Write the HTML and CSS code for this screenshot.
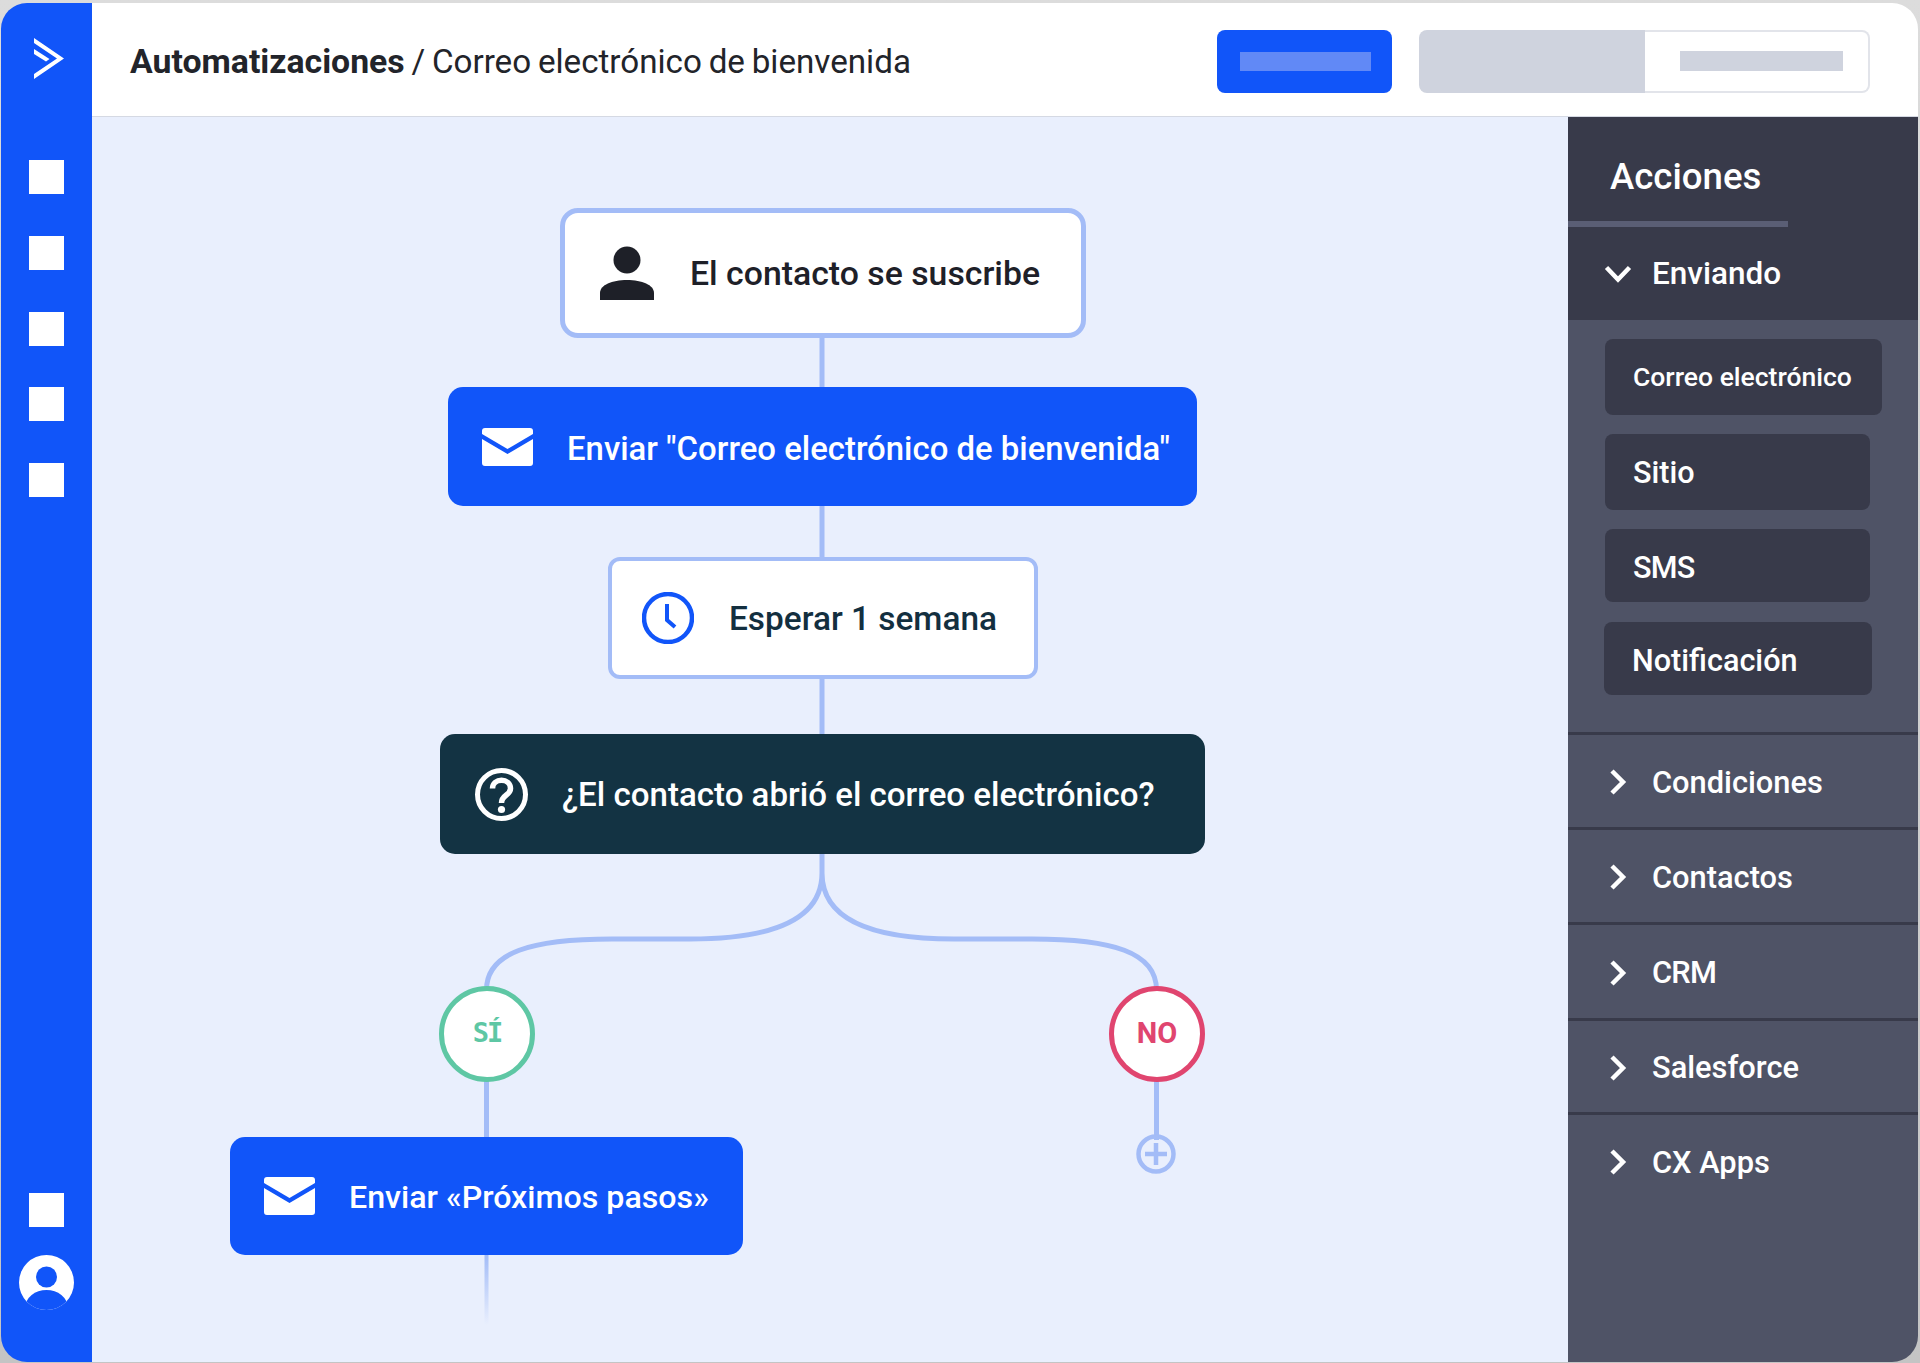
FILE: index.html
```html
<!DOCTYPE html>
<html lang="es">
<head>
<meta charset="utf-8">
<title>Automatizaciones</title>
<link rel="stylesheet" href="styles.css">
</head>
<body>
<div class="frame">
  <nav class="rail">
    <svg class="logo" viewBox="0 0 30 41"><path d="M0 0 L30 20.5 L0 41 V36 L23 20.5 L0 5 Z" fill="#fff"/><path d="M0 11 L15.5 21 L12 23.5 L0 16 Z" fill="#fff"/></svg>
    <div class="rail-items">
      <span class="sq"></span><span class="sq"></span><span class="sq"></span><span class="sq"></span><span class="sq"></span>
    </div>
    <span class="sq bottom-sq"></span>
    <svg class="avatar" viewBox="0 0 55 55"><defs><clipPath id="av"><circle cx="27.5" cy="27.5" r="27.5"/></clipPath></defs><circle cx="27.5" cy="27.5" r="27.5" fill="#fff"/><g clip-path="url(#av)"><circle cx="27.5" cy="22" r="10.5" fill="#1155f9"/><ellipse cx="27.5" cy="52" rx="21" ry="17" fill="#1155f9"/></g></svg>
  </nav>
  <div class="main">
    <header class="topbar">
      <h1 class="crumb"><strong>Automatizaciones</strong> / Correo electrónico de bienvenida</h1>
      <div class="btn-blue"><span></span></div>
      <div class="seg"><span class="seg-left"></span><span class="seg-right"><span></span></span></div>
    </header>
    <div class="body">
      <section class="canvas">
        <svg class="wires" viewBox="0 0 1476 1245">
          <path d="M730 200 V753 C730 795 690 819 598 819 H520 C440 819 394.5 832 394.5 870 M730 753 C730 795 770 819 862 819 H940 C1020 819 1064.5 832 1064.5 870 M394.5 960 V1020 M1064.5 960 V1020"/>
          <defs><linearGradient id="fade" x1="0" y1="0" x2="0" y2="1"><stop offset="0" stop-color="#a3bcf7"/><stop offset="1" stop-color="#a3bcf7" stop-opacity="0"/></linearGradient></defs>
          <rect x="392.5" y="1135" width="4" height="70" fill="url(#fade)"/>
        </svg>
        <div class="node trigger"><svg class="ic-person" viewBox="0 0 54 54"><ellipse cx="27" cy="14" rx="13.5" ry="13.5" fill="#1e2028"/><path d="M0 54 V47 C0 39 12 34 27 34 C42 34 54 39 54 47 V54 Z" fill="#1e2028"/></svg><span>El contacto se suscribe</span></div>
        <div class="node send1"><svg class="ic-mail" viewBox="0 0 51 38"><use href="#mail"/></svg><span class="nudge2">Enviar "Correo electrónico de bienvenida"</span></div>
        <div class="node wait"><svg class="ic-clock" viewBox="0 0 52 52"><circle cx="26" cy="26" r="24" fill="none" stroke="#1155f9" stroke-width="4.5"/><path d="M25 12 V28 L33 35" fill="none" stroke="#1155f9" stroke-width="4"/></svg><span>Esperar 1 semana</span></div>
        <div class="node ask"><svg class="ic-q" viewBox="0 0 53 53"><circle cx="26.5" cy="26.5" r="24" fill="none" stroke="#fff" stroke-width="5"/><path d="M17.5 20.5 C17.5 9.5 35.5 9.5 35.5 20.5 C35.5 27.5 26.5 26.5 26.5 35" fill="none" stroke="#fff" stroke-width="5.5"/><circle cx="26.5" cy="41.5" r="3.6" fill="#fff"/></svg><span>¿El contacto abrió el correo electrónico?</span></div>
        <div class="badge yes">SÍ</div>
        <div class="badge no">NO</div>
        <div class="plus"><svg viewBox="0 0 40 40"><circle cx="20" cy="20" r="17.5" fill="none" stroke="#a3bcf7" stroke-width="4.5"/><path d="M20 9 V31 M9 20 H31" stroke="#a3bcf7" stroke-width="4.5"/></svg></div>
        <div class="node send2"><svg class="ic-mail" viewBox="0 0 51 38"><use href="#mail"/></svg><span class="nudge1">Enviar «Próximos pasos»</span></div>
        <svg class="defs"><defs><symbol id="mail" viewBox="0 0 51 38"><path d="M3 0 H48 Q51 0 51 3 V6 L25.5 21 L0 6 V3 Q0 0 3 0 Z" fill="#fff"/><path d="M0 11 L25.5 26 L51 11 V35 Q51 38 48 38 H3 Q0 38 0 35 Z" fill="#fff"/></symbol></defs></svg>
      </section>
      <aside class="panel">
        <div class="panel-dark">
          <h2 class="tab">Acciones</h2>
          <div class="row open"><svg class="chev-d" viewBox="0 0 28 18"><path d="M2.5 2.5 L14 14.5 L25.5 2.5" fill="none" stroke="#fff" stroke-width="4.5"/></svg><span>Enviando</span></div>
        </div>
        <div class="group">
          <div class="item email">Correo electrónico</div>
          <div class="item site">Sitio</div>
          <div class="item sms tight">SMS</div>
          <div class="item notif">Notificación</div>
        </div>
        <div class="row"><svg class="chev" viewBox="0 0 18 26"><path d="M3 2 L14 13 L3 24" fill="none" stroke="#fff" stroke-width="4.5"/></svg><span>Condiciones</span></div>
        <div class="row"><svg class="chev" viewBox="0 0 18 26"><path d="M3 2 L14 13 L3 24" fill="none" stroke="#fff" stroke-width="4.5"/></svg><span>Contactos</span></div>
        <div class="row tall"><svg class="chev" viewBox="0 0 18 26"><path d="M3 2 L14 13 L3 24" fill="none" stroke="#fff" stroke-width="4.5"/></svg><span class="tight">CRM</span></div>
        <div class="row short"><svg class="chev" viewBox="0 0 18 26"><path d="M3 2 L14 13 L3 24" fill="none" stroke="#fff" stroke-width="4.5"/></svg><span>Salesforce</span></div>
        <div class="row"><svg class="chev" viewBox="0 0 18 26"><path d="M3 2 L14 13 L3 24" fill="none" stroke="#fff" stroke-width="4.5"/></svg><span>CX Apps</span></div>
      </aside>
    </div>
  </div>
</div>
</body>
</html>
```

FILE: styles.css
```css
* { box-sizing: border-box; }
html, body { margin: 0; height: 100%; }
body {
  background: linear-gradient(#dcdcdc, #c4c4c4);
  font-family: "Roboto", "Noto Sans", sans-serif;
  overflow: hidden;
}
.frame {
  margin: 3px 2px 0 1px;
  height: 1359px;
  border-radius: 26px;
  overflow: hidden;
  display: flex;
}
.rail {
  width: 91px;
  background: #1155f9;
  display: flex;
  flex-direction: column;
  align-items: center;
  flex: none;
}
.logo { width: 30px; height: 41px; margin-top: 35px; margin-left: 4px; }
.rail-items { margin-top: 81px; display: flex; flex-direction: column; gap: 41.75px; }
.sq { display: block; width: 35px; height: 34px; background: #fff; }
.bottom-sq { margin-top: auto; }
.avatar { width: 55px; height: 55px; margin: 28px 0 52px; flex: none; }
.main { flex: 1; display: flex; flex-direction: column; min-width: 0; }
.topbar {
  height: 114px;
  background: #fff;
  border-bottom: 1px solid #d5d9e3;
  display: flex;
  align-items: center;
  padding: 3px 48px 0 38px;
  flex: none;
}
.crumb { margin: 0 auto 0 0; font-size: 33.2px; font-weight: 400; color: #22242a; word-spacing: -1.5px; }
.crumb strong { font-weight: 700; font-size: 33.8px; }
.btn-blue {
  width: 175px; height: 63px; background: #1155f9; border-radius: 8px;
  display: flex; align-items: center; justify-content: center;
  margin-right: 27px; padding-left: 2px;
}
.btn-blue span { width: 131px; height: 19px; background: #6189f6; }
.seg { width: 451px; height: 63px; display: flex; }
.seg-left { width: 226px; background: #cfd3de; border-radius: 8px 0 0 8px; }
.seg-right {
  flex: 1; display: flex; align-items: center; justify-content: center;
  border: 2px solid #e2e4ea; border-left: 0; border-radius: 0 8px 8px 0; padding-left: 10px;
}
.seg-right span { width: 163px; height: 20px; background: #cfd3de; }
.body { flex: 1; display: flex; min-height: 0; }
.canvas { flex: 1; background: #e9effd; position: relative; }
.wires { position: absolute; left: 0; top: 3px; width: 1476px; height: 1245px; }
.wires path { fill: none; stroke: #a3bcf7; stroke-width: 5px; }
.defs { position: absolute; width: 0; height: 0; }
.node {
  position: absolute; display: flex; align-items: center;
  font-size: 32px; font-weight: 500; border-radius: 15px;
  white-space: nowrap;
}
.nudge2 { padding-top: 4px; }
.nudge1 { padding-top: 2px; }
.trigger { left: 468px; top: 91px; width: 526px; height: 130px; background: #fff; border: 5px solid #a3bcf7; border-radius: 18px; color: #1e2028; padding-left: 35px; gap: 36px; font-size: 33.8px; }
.send1 { left: 356px; top: 270px; width: 749px; height: 119px; background: #1155f9; color: #fff; padding-left: 34px; gap: 34px; font-size: 32.9px; }
.wait { left: 516px; top: 440px; width: 430px; height: 122px; background: #fff; border: 4px solid #a3bcf7; border-radius: 12px; color: #132f3f; padding-left: 30px; gap: 35px; font-size: 33.4px; }
.ask { left: 348px; top: 617px; width: 765px; height: 120px; background: #133343; color: #fff; padding-left: 35px; gap: 34px; font-size: 33.1px; }
.send2 { left: 138px; top: 1020px; width: 513px; height: 118px; background: #1155f9; color: #fff; padding-left: 34px; gap: 34px; font-size: 32.2px; }
.ic-person { width: 54px; height: 54px; flex: none; }
.ic-mail { width: 51px; height: 38px; flex: none; }
.ic-clock { width: 52px; height: 52px; flex: none; }
.ic-q { width: 53px; height: 53px; flex: none; }
.badge {
  position: absolute; top: 869px; width: 96px; height: 96px; border-radius: 50%;
  background: #fff; border: 5px solid; display: flex; align-items: center; justify-content: center;
  font-size: 29px; font-weight: 700;
}
.yes { left: 347px; color: #5ec7a4; font-family: "DejaVu Sans Mono", monospace; font-size: 27px; letter-spacing: -2px; padding-bottom: 4px; }
.no { left: 1017px; color: #e0456f; padding-bottom: 2px; }
.plus { position: absolute; left: 1044px; top: 1017px; width: 40px; height: 40px; }
.plus svg { display: block; width: 40px; height: 40px; }
.panel { width: 350px; background: #4f5366; flex: none; color: #fff; }
.panel-dark { background: #383a4a; height: 203px; }
.tab {
  margin: 0; height: 110px; width: 220px; padding: 38px 0 0 42px;
  font-size: 36.6px; font-weight: 500; border-bottom: 6px solid #5a5e75;
}
.row {
  height: 95px; display: flex; align-items: center; padding: 2px 0 0 41px;
  font-size: 30.8px; font-weight: 500; border-top: 3px solid #383a4a; gap: 25px;
}
.row.open { height: 93px; border-top: 0; padding: 0 0 0 36px; gap: 20px; font-size: 31.5px; }
.row.tall { height: 96px; }
.row.short { height: 94px; }
.row .chev { width: 18px; height: 26px; flex: none; }
.row .chev-d { width: 28px; height: 18px; flex: none; }
.tight { letter-spacing: -0.8px; }
.group { padding: 19px 0 37px 37px; height: 412px; display: flex; flex-direction: column; }
.item { background: #383a4a; border-radius: 8px; display: flex; align-items: center; padding: 0 0 0 28px; font-size: 30.6px; font-weight: 500; }
.email { width: 277px; height: 76px; font-size: 26.5px; margin-bottom: 19px; }
.site { width: 265px; height: 77px; margin-bottom: 19px; }
.sms { width: 265px; height: 73px; margin-bottom: 20px; padding-top: 4px; }
.notif { width: 268px; height: 73px; margin-left: -1px; padding-top: 4px; }
```
